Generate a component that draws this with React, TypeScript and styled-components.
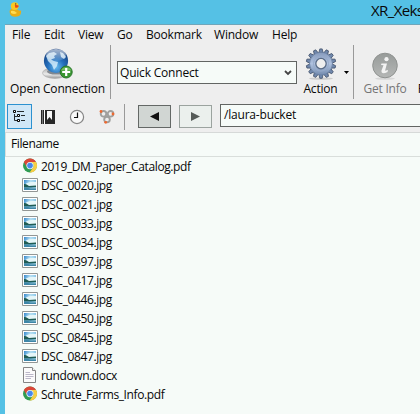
import React from "react";
import styled, { createGlobalStyle } from "styled-components";

const Global = createGlobalStyle`
  * { box-sizing: border-box; }
  body { margin: 0; overflow: hidden; font: 12px/16px "Open Sans", "Noto Sans", sans-serif; color: #080808; }
  svg { display: block; flex: none; }
`;

const Window = styled.div`
  width: 420px; height: 414px; overflow: hidden;
  display: flex; flex-direction: column; background: #55c1e5;
`;
const TitleBar = styled.header`
  height: 24px; flex: none; display: flex; justify-content: space-between;
  padding: 1px 0 0 8px; overflow: hidden;
`;
const Title = styled.div`
  width: 49px; flex: none; white-space: nowrap; overflow: hidden;
  font-size: 15px; line-height: 18px; letter-spacing: -0.6px;
`;
const Body = styled.div`
  flex: 1; min-height: 0; margin-left: 5px; display: flex; flex-direction: column;
  background: #f6fbf8; border-top: 1px solid #70a6ba;
`;
const Label = styled.span<{ $tight?: boolean }>`
  white-space: nowrap; letter-spacing: ${(p) => (p.$tight ? -0.39 : -0.2)}px;
`;
const MenuBar = styled.nav`
  height: 20px; flex: none; background: #eee; display: flex; padding: 2px 0 0 7px;
`;
const MenuItem = styled.div<{ $width: number }>`
  width: ${(p) => p.$width}px; flex: none;
`;
const Toolbar = styled.div`
  height: 54px; flex: none; background: #eee; display: flex; overflow: hidden;
`;
const ToolButton = styled.div<{ $width: number; $disabled?: boolean }>`
  width: ${(p) => p.$width}px; flex: none; height: 54px; display: flex; flex-direction: column;
  align-items: center; justify-content: space-between; padding: 3px 0 2px;
  color: ${(p) => (p.$disabled ? "#757575" : "#080808")};
`;
const Separator = styled.div<{ $height: number }>`
  width: 1px; height: ${(p) => p.$height}px; flex: none; background: #999;
`;
const Combo = styled.div`
  width: 180px; height: 23px; flex: none; margin: 16px 0 0 6px; padding: 0 4px 0 2px;
  display: flex; align-items: center; justify-content: space-between;
  background: #f6fbf8; border: 1px solid #626563;
`;
const DropArrow = styled.div`
  width: 9px; flex: none; padding: 26px 0 0 0;
`;
const NavBar = styled.div`
  height: 34px; flex: none; background: #eee; display: flex; align-items: flex-start;
  padding: 5px 0 0 2px; border-bottom: 1px solid #d6d9d8;
`;
const ViewButton = styled.div<{ $active?: boolean; $width: number }>`
  width: ${(p) => p.$width}px; height: 25px; flex: none; display: flex; align-items: center; justify-content: center;
  ${(p) => p.$active && "background: #d1e7f7; border: 1px solid #2c91d0; padding: 0 1px 0 0;"}
`;
const NavButton = styled.div<{ $disabled?: boolean }>`
  width: 33px; height: 23px; flex: none; display: flex; align-items: center; justify-content: center;
  margin: 1px 8px 0 0; padding: 0 1px 1px 0;
  background: ${(p) => (p.$disabled ? "#ebf0ed" : "#d1d6d3")};
  border: 1px solid ${(p) => (p.$disabled ? "#9ba39f" : "#646866")};
`;
const NavGroup = styled.div`
  display: flex; margin-left: 13px; flex: none;
`;
const PathField = styled.div`
  flex: 1; height: 23px; background: #f6fbf8; border: 1px solid #626563; border-right: 0;
  padding: 2px 0 0 3px;
`;
const ColumnHeader = styled.div`
  height: 24px; flex: none; padding: 3px 0 0 5px;
  border-bottom: 1px solid #d9dedb; border-left: 1px solid #d9dedb;
`;
const FileList = styled.ul`
  list-style: none; margin: 0; padding: 0 0 0 17px;
`;
const FileRow = styled.li`
  height: 19px; display: flex; align-items: center; gap: 3px;
`;
const FileIcon = styled.div`
  height: 17px; flex: none;
`;

const Duck = () => (
  <svg width="16" height="17" viewBox="0 0 16 17">
    <path d="M4.5 8C2 8 1.2 9.5 1.8 12Q2.5 15.8 7 15.8Q12 15.8 12.8 12.5L13.2 9.5Q11 10 9 8.5Z" fill="#e9ae16" />
    <circle cx="6.7" cy="5.1" r="3.9" fill="#fac821" />
    <path d="M3 10Q6 9 9 12Q6 14 3 12Z" fill="#ffdc52" />
    <path d="M6.8 3.8L10.6 4.6Q11 7.2 7.3 6.8Z" fill="#ea4812" />
    <circle cx="7.7" cy="2.9" r=".7" fill="#4a3419" />
  </svg>
);

const Globe = () => (
  <svg width="34" height="32" viewBox="0 0 34 32">
    <defs>
      <radialGradient id="sea" cx=".5" cy=".75" r=".75">
        <stop stopColor="#69bdf0" /><stop offset=".45" stopColor="#246fbd" /><stop offset="1" stopColor="#153b78" />
      </radialGradient>
      <linearGradient id="stand" x2="0" y2="1"><stop stopColor="#a5a5a5" /><stop offset=".6" stopColor="#ececec" /><stop offset="1" stopColor="#999" /></linearGradient>
      <linearGradient id="shine" x2="0" y2="1"><stop stopColor="#fff" stopOpacity=".65" /><stop offset="1" stopColor="#fff" stopOpacity=".1" /></linearGradient>
    </defs>
    <ellipse cx="14" cy="25" rx="12.5" ry="5.4" fill="url(#stand)" stroke="#aaa" strokeWidth=".6" />
    <ellipse cx="15" cy="23.6" rx="9" ry="3" fill="#818890" />
    <circle cx="15" cy="12.8" r="12.1" fill="url(#sea)" />
    <path d="M5 8L8 5L13 4L16 6L13 8L14 10L10 11.5L13 13L17 14L16 18L13 22L11 17L7 13Z M19 4L22 5L25 9L23 11L20 9Z" fill="#d5edfa" opacity=".82" />
    <ellipse cx="15" cy="7" rx="10" ry="6" fill="url(#shine)" />
    <circle cx="25.2" cy="24" r="6" fill="#399631" stroke="#28752a" />
    <path d="M20 22.5a5.5 5 0 0 1 10.4 0Z" fill="#76bd62" />
    <path d="M25.2 20v8M21.2 24h8" stroke="#fff" strokeWidth="2.2" />
  </svg>
);

const teeth = Array.from({ length: 14 }, (_, i) => (i * 360) / 14);
const Gear = () => (
  <svg width="32" height="32" viewBox="0 0 32 32">
    <defs><linearGradient id="steel" x2="0" y2="1"><stop stopColor="#8599bb" /><stop offset=".5" stopColor="#b0c2df" /><stop offset="1" stopColor="#748caf" /></linearGradient></defs>
    <ellipse cx="16" cy="30.6" rx="12" ry="1.1" fill="#ccc" />
    {teeth.map((a) => <path key={a} d="M13.8 5L14.8 .9H17.2L18.2 5Z" transform={`rotate(${a} 16 15.6)`} fill="#7088ad" stroke="#43526b" strokeWidth=".8" />)}
    <circle cx="16" cy="15.6" r="11.4" fill="url(#steel)" stroke="#667d9f" strokeWidth=".7" />
    <circle cx="16" cy="15.6" r="7.5" fill="none" stroke="#96aaca" />
    <circle cx="16" cy="15.6" r="5.2" fill="#eee" stroke="#596b86" strokeWidth="1.3" />
  </svg>
);

const Info = () => (
  <svg width="32" height="32" viewBox="0 0 32 32">
    <defs><linearGradient id="grey" x2="0" y2="1"><stop stopColor="#979b99" /><stop offset="1" stopColor="#b5b7b6" /></linearGradient></defs>
    <ellipse cx="16" cy="30.6" rx="10" ry="1.2" fill="#d6d6d6" />
    <circle cx="16" cy="17.5" r="12.3" fill="url(#grey)" stroke="#8f9290" />
    <circle cx="17.5" cy="11.2" r="2.1" fill="#f3f3f3" />
    <path d="M12.5 15.5H18L16 22.7L19 22L18.5 24Q12 27 12.5 22.5L14.5 17.3L12 17Z" fill="#f3f3f3" />
  </svg>
);

const Tree = () => (
  <svg width="13" height="13" viewBox="0 0 13 13" fill="none" stroke="#252b2e">
    <path d="M1.5 4V10.5H4M1.5 6.5H4M4 1.5H11M8 5.5H12M8 10.5H12" />
    <path d="M.5.5h2v2h-2ZM4.5 4.5h2v2h-2ZM4.5 9.5h2v2h-2Z" fill="#fff" stroke="#050505" />
  </svg>
);
const Book = () => (
  <svg width="14" height="14" viewBox="0 0 14 14">
    <path d="M0 0h14v14H0Z" fill="#272727" /><path d="M1.5 0v14" stroke="#777" /><path d="M3.5 0v14" stroke="#fff" />
    <path d="M6 1h5v9L8.5 7L6 10Z" fill="#f7f7f7" />
  </svg>
);
const Clock = () => (
  <svg width="16" height="16" viewBox="0 0 16 16">
    <circle cx="8" cy="8" r="6.6" fill="#f9f9f9" stroke="#858585" strokeWidth="1.2" />
    <path d="M8.5 3.5V8.5H5" fill="none" stroke="#111" strokeWidth="1.2" />
  </svg>
);
const Bonjour = () => (
  <svg width="16" height="16" viewBox="0 0 16 16">
    <g fill="none" stroke="#a0a09e" strokeWidth="1.9"><circle cx="4.5" cy="4.8" r="2.8" /><circle cx="11.5" cy="4.8" r="2.8" /><circle cx="8" cy="10.5" r="2.8" /></g>
    <g fill="#ed6931"><circle cx="2" cy="2.5" r="1.4" /><circle cx="14" cy="5" r="1.4" /><circle cx="6.7" cy="13.3" r="1.4" /></g>
  </svg>
);

const Chrome = () => (
  <svg width="16" height="16" viewBox="0 0 16 16">
    <circle cx="8" cy="7.6" r="7" fill="#2f9c52" />
    <path d="M1.9 4.1A7 7 0 0 1 14.1 4.2H8A3.6 3.6 0 0 0 4.8 9.2Z" fill="#db4638" />
    <path d="M8 4.1H14.1A7 7 0 0 1 7.6 14.6L11.1 9.4A3.6 3.6 0 0 0 8 4.1Z" fill="#f8ce44" />
    <circle cx="8" cy="7.6" r="3.6" fill="#eef5f5" /><circle cx="8" cy="7.6" r="2.8" fill="#4788ed" />
  </svg>
);
const Photo = () => (
  <svg width="16" height="15" viewBox="0 0 16 15">
    <defs>
      <linearGradient id="sky" x2="1" y2=".4"><stop stopColor="#3287cc" /><stop offset=".5" stopColor="#b5dff2" /><stop offset="1" stopColor="#78bde4" /></linearGradient>
    </defs>
    <path d="M.5 1.5h15v13H.5Z" fill="#fff" stroke="#929795" />
    <path d="M2 3h12v10H2Z" fill="url(#sky)" />
    <path d="M4 6.5Q8 4 14 5V9H4Z" fill="#e4f6f8" />
    <path d="M2 7Q4 6.5 7 9L14 8.5V10.5H2Z" fill="#1f5c54" />
    <path d="M2 10.5H14V13H2Z" fill="#3d86a8" />
    <path d="M6 11.5L14 10V11.5Z" fill="#8fc4d4" />
  </svg>
);
const Document = () => (
  <svg width="16" height="16" viewBox="0 0 16 16">
    <path d="M1.5.5H10L13.5 4V15.5H1.5Z" fill="#fbfbfb" stroke="#858585" /><path d="M10.5.5V3.5H13.5" fill="#eee" stroke="#858585" />
    <path d="M3.5 5.5H8M3.5 7.5H11.5M3.5 9.5H11.5M3.5 11.5H9" stroke="#bbb7c9" />
  </svg>
);

const icons = { pdf: Chrome, jpg: Photo, docx: Document };
const menus: [string, number][] = [["File", 32], ["Edit", 34], ["View", 39], ["Go", 29], ["Bookmark", 68], ["Window", 58], ["Help", 40]];
const files: [string, keyof typeof icons][] = [
  ["2019_DM_Paper_Catalog.pdf", "pdf"],
  ...["0020", "0021", "0033", "0034", "0397", "0417", "0446", "0450", "0845", "0847"].map((n): [string, "jpg"] => [`DSC_${n}.jpg`, "jpg"]),
  ["rundown.docx", "docx"],
  ["Schrute_Farms_Info.pdf", "pdf"],
];

export default function App() {
  return (
    <>
      <Global />
      <Window>
        <TitleBar><Duck /><Title>XR_Xeks</Title></TitleBar>
        <Body>
          <MenuBar>
            {menus.map(([name, width]) => <MenuItem key={name} $width={width}><Label>{name}</Label></MenuItem>)}
          </MenuBar>
          <Toolbar>
            <ToolButton $width={105}><Globe /><Label>Open Connection</Label></ToolButton>
            <Separator $height={54} />
            <Combo>
              <Label>Quick Connect</Label>
              <svg width="8" height="6" viewBox="0 0 8 6"><path d="M1 1L4 4L7 1" fill="none" stroke="#444" strokeWidth="1.8" /></svg>
            </Combo>
            <ToolButton $width={47}><Gear /><Label>Action</Label></ToolButton>
            <DropArrow><svg width="5" height="3" viewBox="0 0 5 3"><path d="M0 0H5L2.5 3Z" /></svg></DropArrow>
            <Separator $height={54} />
            <ToolButton $width={62} $disabled><Info /><Label>Get Info</Label></ToolButton>
            <ToolButton $width={45}><span /><Label>Refresh</Label></ToolButton>
          </Toolbar>
          <NavBar>
            <ViewButton $active $width={25}><Tree /></ViewButton>
            <ViewButton $width={32}><Book /></ViewButton>
            <ViewButton $width={26}><Clock /></ViewButton>
            <ViewButton $width={34}><Bonjour /></ViewButton>
            <Separator $height={26} />
            <NavGroup>
              <NavButton><svg width="9" height="9" viewBox="0 0 9 9"><path d="M9 0V9L0 4.5Z" fill="#111" /></svg></NavButton>
              <NavButton $disabled><svg width="9" height="9" viewBox="0 0 9 9"><path d="M0 0V9L9 4.5Z" fill="#565b58" /></svg></NavButton>
            </NavGroup>
            <PathField><Label>/laura-bucket</Label></PathField>
          </NavBar>
          <ColumnHeader><Label $tight>Filename</Label></ColumnHeader>
          <FileList>
            {files.map(([name, kind]) => {
              const Icon = icons[kind];
              return <FileRow key={name}><FileIcon><Icon /></FileIcon><Label $tight>{name}</Label></FileRow>;
            })}
          </FileList>
        </Body>
      </Window>
    </>
  );
}
